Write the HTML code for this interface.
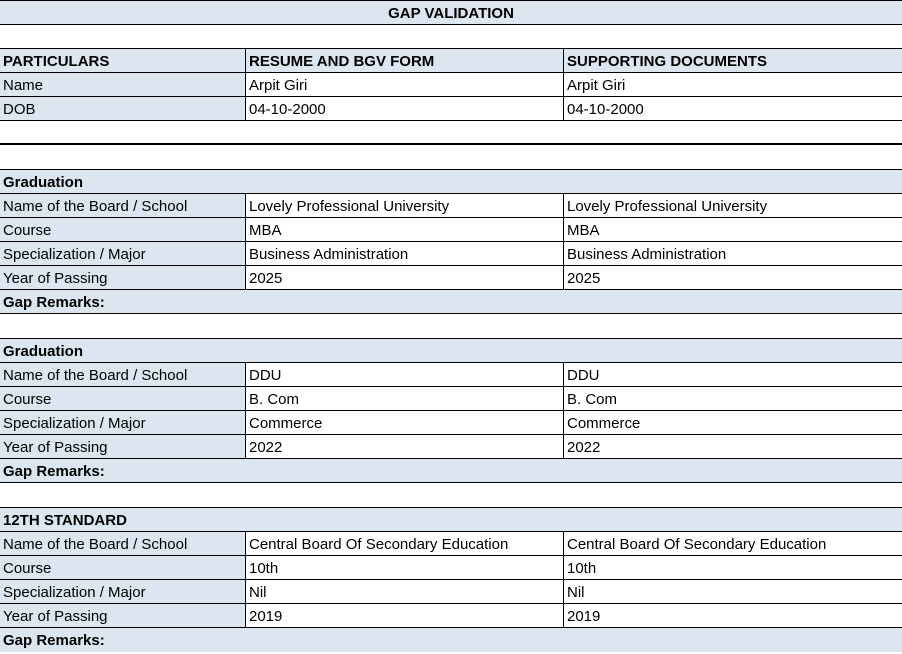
<!DOCTYPE html>
<html><head><meta charset="utf-8"><style>
*{margin:0;padding:0;box-sizing:border-box}
body{width:902px;height:650px;overflow:hidden;background:#fff;font-family:"Liberation Sans",Arial,sans-serif;font-size:15px;color:#000;position:relative}
.r{position:absolute;left:0;width:902px;height:25px;border-top:1px solid #000;line-height:26px}
.b{background:#dce6f1;font-weight:bold}
.c{position:absolute;top:0;height:24px;padding-left:3px;white-space:nowrap;line-height:26px}
.c1{left:0;width:245px;background:#dce6f1}
.c2{left:245px;width:318px;border-left:1px solid #000;background:#fff}
.c3{left:563px;width:339px;border-left:1px solid #000;background:#fff}
.hd .c2,.hd .c3{background:#dce6f1}
.p{padding-left:3px}
</style></head><body>
<div class="r b" style="top:0;text-align:center">GAP VALIDATION</div>
<div class="r" style="top:24px"></div>
<div class="r b hd" style="top:48px"><div class="c c1">PARTICULARS</div><div class="c c2">RESUME AND BGV FORM</div><div class="c c3">SUPPORTING DOCUMENTS</div></div>
<div class="r" style="top:72px"><div class="c c1">Name</div><div class="c c2">Arpit Giri</div><div class="c c3">Arpit Giri</div></div>
<div class="r" style="top:96px"><div class="c c1">DOB</div><div class="c c2">04-10-2000</div><div class="c c3">04-10-2000</div></div>
<div class="r" style="top:120px;border-bottom:2px solid #000"></div>

<div class="r b p" style="top:169px">Graduation</div>
<div class="r" style="top:193px"><div class="c c1">Name of the Board / School</div><div class="c c2">Lovely Professional University</div><div class="c c3">Lovely Professional University</div></div>
<div class="r" style="top:217px"><div class="c c1">Course</div><div class="c c2">MBA</div><div class="c c3">MBA</div></div>
<div class="r" style="top:241px"><div class="c c1">Specialization / Major</div><div class="c c2">Business Administration</div><div class="c c3">Business Administration</div></div>
<div class="r" style="top:265px"><div class="c c1">Year of Passing</div><div class="c c2">2025</div><div class="c c3">2025</div></div>
<div class="r b p" style="top:289px">Gap Remarks:</div>
<div class="r" style="top:313px"></div>

<div class="r b p" style="top:338px">Graduation</div>
<div class="r" style="top:362px"><div class="c c1">Name of the Board / School</div><div class="c c2">DDU</div><div class="c c3">DDU</div></div>
<div class="r" style="top:386px"><div class="c c1">Course</div><div class="c c2">B. Com</div><div class="c c3">B. Com</div></div>
<div class="r" style="top:410px"><div class="c c1">Specialization / Major</div><div class="c c2">Commerce</div><div class="c c3">Commerce</div></div>
<div class="r" style="top:434px"><div class="c c1">Year of Passing</div><div class="c c2">2022</div><div class="c c3">2022</div></div>
<div class="r b p" style="top:458px">Gap Remarks:</div>
<div class="r" style="top:482px"></div>

<div class="r b p" style="top:507px">12TH STANDARD</div>
<div class="r" style="top:531px"><div class="c c1">Name of the Board / School</div><div class="c c2">Central Board Of Secondary Education</div><div class="c c3">Central Board Of Secondary Education</div></div>
<div class="r" style="top:555px"><div class="c c1">Course</div><div class="c c2">10th</div><div class="c c3">10th</div></div>
<div class="r" style="top:579px"><div class="c c1">Specialization / Major</div><div class="c c2">Nil</div><div class="c c3">Nil</div></div>
<div class="r" style="top:603px"><div class="c c1">Year of Passing</div><div class="c c2">2019</div><div class="c c3">2019</div></div>
<div class="r b p" style="top:627px">Gap Remarks:</div>
</body></html>
